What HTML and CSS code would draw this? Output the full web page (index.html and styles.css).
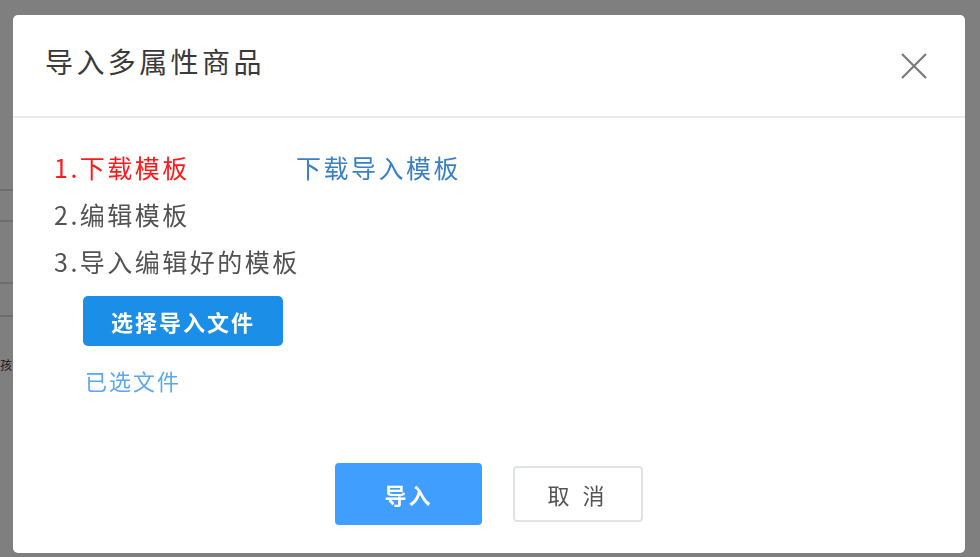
FILE: index.html
```html
<!DOCTYPE html>
<html lang="zh-CN">
<head>
    <meta charset="UTF-8">
    <meta name="viewport" content="width=device-width, initial-scale=1.0">
    <title>导入多属性商品</title>
    <link rel="stylesheet" href="styles.css">
</head>
<body>
    <div class="page">
        <div class="row row-a"></div>
        <div class="row row-b"></div>
        <div class="row row-c"></div>
        <div class="row row-d"><span class="cell-text">孩</span></div>
    </div>

    <div class="mask">
        <div class="dialog">
            <div class="dialog-header">
                <span class="dialog-title">导入多属性商品</span>
                <button class="dialog-close" aria-label="关闭">
                    <svg width="26" height="26" viewBox="0 0 26 26">
                        <path d="M1 1 L25 25 M25 1 L1 25" stroke="#7a7a7a" stroke-width="2.2" fill="none"/>
                    </svg>
                </button>
            </div>

            <div class="dialog-body">
                <div class="step">
                    <span class="step-first">1.下载模板</span>
                    <a class="template-link" href="#">下载导入模板</a>
                </div>
                <div class="step">2.编辑模板</div>
                <div class="step">3.导入编辑好的模板</div>
                <button class="btn-file">选择导入文件</button>
                <div class="file-name">已选文件</div>
            </div>

            <div class="dialog-footer">
                <button class="btn btn-primary">导入</button>
                <button class="btn btn-default">取 消</button>
            </div>
        </div>
    </div>
</body>
</html>
```

FILE: styles.css
```css
* {
    box-sizing: border-box;
}
body {
    margin: 0;
    font-family: "Noto Sans CJK SC", "Noto Sans", sans-serif;
    background: #fff;
    color: #333;
}
.page {
    width: 13px;
    height: 557px;
    padding-top: 189px;
    overflow: hidden;
}
.row {
    border-top: 2px solid #dadada;
}
.row-a {
    height: 31px;
}
.row-b {
    height: 62px;
}
.row-c {
    height: 33px;
}
.row-d {
    padding-top: 40px;
    font-size: 12px;
    color: #3a3a3a;
    line-height: 16px;
}
.cell-text {
    display: block;
}
.mask {
    position: fixed;
    inset: 0;
    background: rgba(0, 0, 0, 0.5);
    padding: 15px 15px 4px 13px;
    display: flex;
}
.dialog {
    flex: 1;
    background: #fff;
    border-radius: 5px;
    display: flex;
    flex-direction: column;
}
.dialog-header {
    height: 103px;
    padding: 0 38px 0 32px;
    border-bottom: 2px solid #ececec;
    display: flex;
    align-items: center;
    justify-content: space-between;
}
.dialog-title {
    font-size: 28px;
    letter-spacing: 3.4px;
    color: #3a3a3a;
    margin-top: -10px;
}
.dialog-close {
    border: none;
    background: none;
    padding: 0;
    width: 26px;
    height: 26px;
    cursor: pointer;
}
.dialog-body {
    flex: 1;
    padding: 26px 0 0 41px;
}
.step {
    font-size: 25px;
    letter-spacing: 2.5px;
    line-height: 47px;
    color: #525252;
}
.step-first {
    color: #ff1a1a;
}
.template-link {
    margin-left: 98px;
    color: #3a80c6;
    text-decoration: none;
}
.btn-file {
    display: block;
    margin: 11px 0 0 29px;
    width: 200px;
    height: 50px;
    border: none;
    border-radius: 5px;
    background: #1b8fe8;
    color: #fff;
    font-family: inherit;
    font-size: 22px;
    font-weight: 700;
    letter-spacing: 2px;
    cursor: pointer;
}
.file-name {
    margin: 19px 0 0 31px;
    font-size: 22px;
    letter-spacing: 2px;
    line-height: 30px;
    color: #5aa8f2;
}
.dialog-footer {
    display: flex;
    justify-content: center;
    align-items: center;
    gap: 31px;
    padding-bottom: 28px;
}
.btn {
    font-family: inherit;
    font-size: 22px;
    border-radius: 4px;
    cursor: pointer;
}
.btn-primary {
    width: 147px;
    height: 62px;
    border: none;
    background: #409eff;
    color: #fff;
    font-weight: 700;
    letter-spacing: 2px;
}
.btn-default {
    width: 130px;
    height: 56px;
    border: 2px solid #e0e3e8;
    background: #fff;
    color: #555;
    letter-spacing: 4px;
}
```
